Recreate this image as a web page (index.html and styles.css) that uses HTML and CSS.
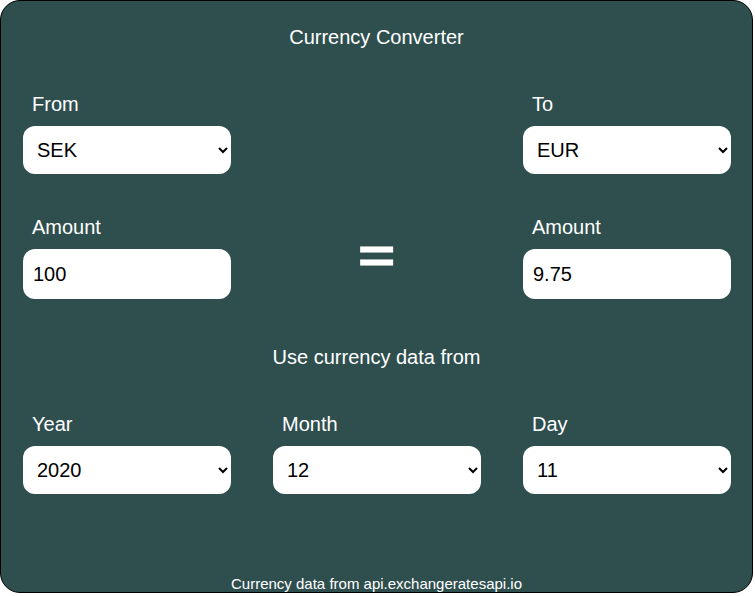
FILE: index.html
```html
<!DOCTYPE html>
<html>
<head>
<meta charset="utf-8">
<link rel="stylesheet" href="styles.css">
</head>
<body>
<div class="card">
  <h1 class="title">Currency Converter</h1>
  <div class="row row-first">
    <div class="field">
      <label class="label">From</label>
      <select class="control select"><option>SEK</option></select>
    </div>
    <div class="field"></div>
    <div class="field">
      <label class="label">To</label>
      <select class="control select"><option>EUR</option></select>
    </div>
  </div>
  <div class="row row-amount">
    <div class="field">
      <label class="label">Amount</label>
      <input class="control input" type="text" value="100">
    </div>
    <div class="equals">=</div>
    <div class="field">
      <label class="label">Amount</label>
      <input class="control input" type="text" value="9.75">
    </div>
  </div>
  <p class="subtitle">Use currency data from</p>
  <div class="row row-date">
    <div class="field">
      <label class="label">Year</label>
      <select class="control select"><option>2020</option></select>
    </div>
    <div class="field">
      <label class="label">Month</label>
      <select class="control select"><option>12</option></select>
    </div>
    <div class="field">
      <label class="label">Day</label>
      <select class="control select"><option>11</option></select>
    </div>
  </div>
  <footer class="footer">Currency data from api.exchangeratesapi.io</footer>
</div>
</body>
</html>
```

FILE: styles.css
```css
html, body {
  margin: 0;
  padding: 0;
  background: #ffffff;
}
body {
  font-family: "Liberation Sans", Arial, sans-serif;
}
.card {
  width: 753px;
  height: 593px;
  box-sizing: border-box;
  border: 1px solid #000;
  border-radius: 20px;
  background: #2f4f4f;
  color: #ffffff;
  display: flex;
  flex-direction: column;
  padding: 25px 22px 0 22px;
}
.title {
  margin: 0;
  font-size: 20px;
  font-weight: normal;
  line-height: 23px;
  text-align: center;
}
.row {
  display: grid;
  grid-template-columns: 208px 208px 208px;
  column-gap: 42px;
}
.row-first {
  margin-top: 44px;
}
.row-amount {
  margin-top: 42px;
}
.row-date {
  margin-top: 44px;
}
.field {
  display: flex;
  flex-direction: column;
}
.label {
  display: block;
  font-size: 20px;
  line-height: 23px;
  padding-left: 9px;
  margin-bottom: 10px;
}
.control {
  box-sizing: border-box;
  width: 208px;
  border: none;
  border-radius: 12px;
  background: #ffffff;
  color: #000;
  font-family: "Liberation Sans", Arial, sans-serif;
  font-size: 20px;
  margin: 0;
  outline: none;
}
.select {
  height: 48px;
  padding: 0 6px 0 10px;
}
.input {
  height: 50px;
  padding: 0 10px;
}
.equals {
  align-self: center;
  justify-self: center;
  font-size: 47px;
  font-weight: bold;
  line-height: 40px;
  -webkit-text-stroke: 1px #ffffff;
  transform: scaleX(1.34);
  margin-bottom: 4px;
}
.subtitle {
  margin: 47px 0 0 0;
  font-size: 20px;
  line-height: 23px;
  text-align: center;
}
.footer {
  margin-top: auto;
  font-size: 15px;
  line-height: 17px;
  text-align: center;
  margin-bottom: 0;
}
```
